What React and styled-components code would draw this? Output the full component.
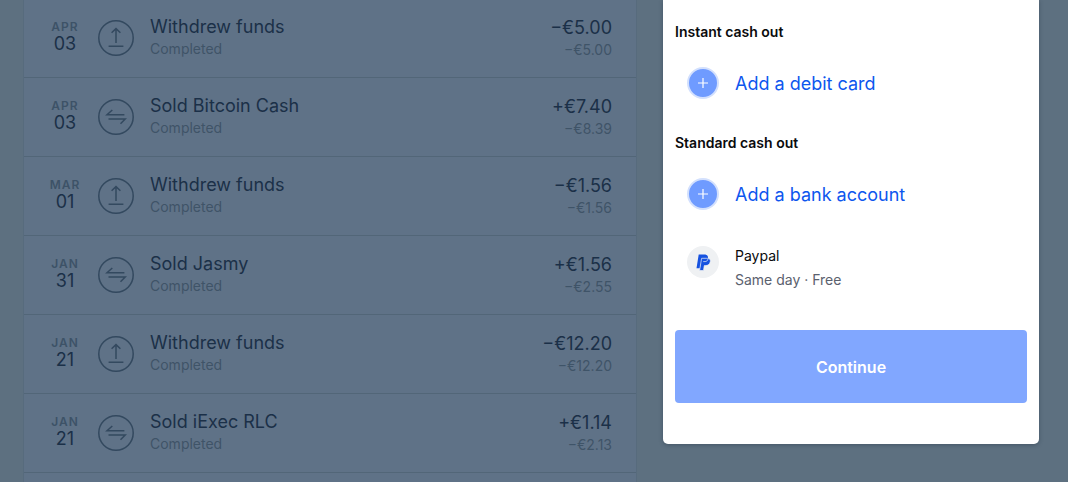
import React from 'react'
import styled, { createGlobalStyle } from 'styled-components'

const transactions = [
  { month: 'Apr', day: '03', type: 'withdraw', title: 'Withdrew funds', amount: '−€5.00', sub: '−€5.00' },
  { month: 'Apr', day: '03', type: 'sell', title: 'Sold Bitcoin Cash', amount: '+€7.40', sub: '−€8.39' },
  { month: 'Mar', day: '01', type: 'withdraw', title: 'Withdrew funds', amount: '−€1.56', sub: '−€1.56' },
  { month: 'Jan', day: '31', type: 'sell', title: 'Sold Jasmy', amount: '+€1.56', sub: '−€2.55' },
  { month: 'Jan', day: '21', type: 'withdraw', title: 'Withdrew funds', amount: '−€12.20', sub: '−€12.20' },
  { month: 'Jan', day: '21', type: 'sell', title: 'Sold iExec RLC', amount: '+€1.14', sub: '−€2.13' },
]

function TransactionIcon({ type }) {
  return (
    <Icon viewBox='0 0 36 36' aria-hidden='true'>
      <circle cx='18' cy='18' r='17.2' />
      {type === 'withdraw' ? (
        <path d='M18 23V9M13.6 12.8L18 8.6l4.4 4.2M10.6 26.3h14.8' />
      ) : (
        <path d='M26.4 15.8H9l5.3-4.8M10.5 20H27.2l-4.7 4.7' />
      )}
    </Icon>
  )
}

function PaypalLogo() {
  return (
    <svg width='15' height='17' viewBox='0 0 15 17' aria-hidden='true'>
      <path
        fill='#1652e0'
        d='M2.7 0.5h5.6c2.7 0 4.1 1.5 3.7 3.9-.5 3-2.4 4.3-5.1 4.3H5l-.9 5.5H.5z'
      />
      <path
        fill='#1652e0'
        stroke='#eff1f3'
        strokeWidth='0.7'
        d='M5.6 4.3h4.5c2 0 4.7.2 4.2 3.3-.5 2.8-2.3 4-4.9 4H8.300l-.8 4.900H3.600z'
      />
      <path fill='none' stroke='#eff1f3' strokeWidth='0.7' d='M7.2 7.6h1.9c1.4 0 2.5-.8 2.900-2.600' />
    </svg>
  )
}

function AddMethod({ children }) {
  return (
    <AddButton type='button'>
      <PlusBadge>
        <svg width='12' height='12' viewBox='0 0 12 12' aria-hidden='true'>
          <path d='M6 1v10M1 6h10' stroke='#fff' strokeWidth='1.2' />
        </svg>
      </PlusBadge>
      {children}
    </AddButton>
  )
}

function App() {
  return (
    <>
      <GlobalStyle />
      <Page>
        <TransactionList>
          {transactions.map((item, index) => (
            <Transaction key={index}>
              <DateBlock>
                <Month>{item.month}</Month>
                <Day>{item.day}</Day>
              </DateBlock>
              <TransactionIcon type={item.type} />
              <Details>
                <Title>{item.title}</Title>
                <Muted>Completed</Muted>
              </Details>
              <Amounts>
                <Title>{item.amount}</Title>
                <Muted>{item.sub}</Muted>
              </Amounts>
            </Transaction>
          ))}
        </TransactionList>
        <CashOut>
          <Heading>Instant cash out</Heading>
          <AddMethod>Add a debit card</AddMethod>
          <Heading $spaced>Standard cash out</Heading>
          <AddMethod>Add a bank account</AddMethod>
          <PaypalOption type='button'>
            <PaypalBadge>
              <PaypalLogo />
            </PaypalBadge>
            <span>
              <OptionName>Paypal</OptionName>
              <OptionInfo>Same day · Free</OptionInfo>
            </span>
          </PaypalOption>
          <ContinueButton type='button'>Continue</ContinueButton>
        </CashOut>
      </Page>
    </>
  )
}

const GlobalStyle = createGlobalStyle`
  * {
    box-sizing: border-box;
  }
  body {
    margin: 0;
    background: #5d7080;
    font-family: Inter, 'Liberation Sans', sans-serif;
  }
  button {
    font-family: inherit;
    border: 0;
    background: none;
    cursor: pointer;
    text-align: left;
  }
`

const Page = styled.main`
  display: grid;
  grid-template-columns: minmax(0, 1fr) 376px;
  gap: 26px;
  height: 100vh;
  overflow: hidden;
  padding: 0 29px 0 23px;
`

const TransactionList = styled.ul`
  list-style: none;
  margin: -1px 0 0;
  padding: 0;
  background: #5f7287;
  border: solid #576b7d;
  border-width: 0 1px;
`

const Transaction = styled.li`
  display: flex;
  align-items: center;
  gap: 16px;
  height: 79px;
  padding: 0 24px;
  border-bottom: 1px solid #526678;
`

const DateBlock = styled.div`
  width: 34px;
  padding-bottom: 4px;
  text-align: center;
`

const Month = styled.div`
  font-size: 12px;
  font-weight: 600;
  line-height: 16px;
  letter-spacing: 1px;
  text-transform: uppercase;
  color: #3d5267;
`

const Day = styled.div`
  font-size: 18px;
  line-height: 18px;
  color: #1b3048;
`

const Icon = styled.svg`
  flex: none;
  width: 36px;
  height: 36px;
  fill: none;
  stroke: #33495f;
  stroke-width: 1.5;
`

const Details = styled.div`
  flex: 1;
  padding-bottom: 2px;
`

const Amounts = styled.div`
  text-align: right;
`

const Title = styled.div`
  font-size: 18px;
  line-height: 24px;
  color: #1b3048;
`

const Muted = styled.div`
  font-size: 14px;
  line-height: 20px;
  color: #3f5468;
`

const CashOut = styled.aside`
  align-self: start;
  padding: 22px 12px 41px;
  background: #fff;
  border-radius: 0 0 5px 5px;
  box-shadow: 0 1px 4px rgba(20, 35, 50, 0.35);
`

const Heading = styled.h2`
  margin: ${({ $spaced }) => ($spaced ? '9px' : '0')} 0 0;
  font-size: 14px;
  font-weight: 600;
  line-height: 20px;
  color: #0a0b0d;
`

const AddButton = styled.button`
  display: flex;
  align-items: center;
  gap: 16px;
  width: 100%;
  height: 82px;
  padding: 0 12px;
  font-size: 18px;
  color: #0d56ee;
`

const PlusBadge = styled.span`
  display: grid;
  place-items: center;
  width: 32px;
  height: 32px;
  border: 2px solid #d3e0fd;
  border-radius: 50%;
  background: #6f9bff;
`

const PaypalOption = styled.button`
  display: flex;
  gap: 16px;
  width: 100%;
  padding: 9px 12px 0;
`

const PaypalBadge = styled.span`
  display: grid;
  place-items: center;
  width: 32px;
  height: 32px;
  margin-top: 2px;
  border-radius: 50%;
  background: #eff1f3;
`

const OptionName = styled.span`
  display: block;
  font-size: 14px;
  line-height: 24px;
  color: #0a0b0d;
`

const OptionInfo = styled(OptionName)`
  color: #5b616e;
`

const ContinueButton = styled.button`
  width: 100%;
  height: 73px;
  margin-top: 38px;
  padding: 0;
  border-radius: 4px;
  background: #81a7ff;
  color: #fff;
  font-size: 16px;
  font-weight: 600;
  && {
    text-align: center;
  }
`

export default App
